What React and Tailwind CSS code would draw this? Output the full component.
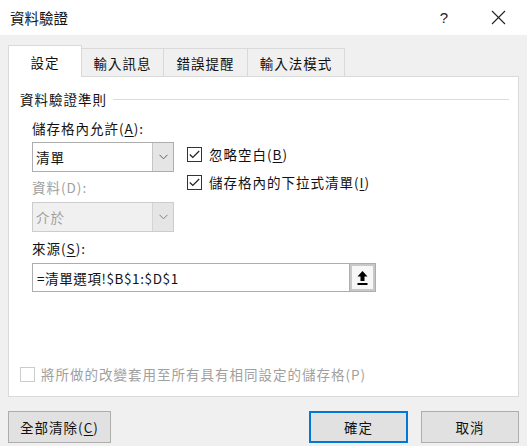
import React from "react";

const Chevron = ({ color = "#606060" }) => (
  <svg width="9" height="6" viewBox="0 0 9 6">
    <polyline points="0.5,0.8 4.5,4.8 8.5,0.8" fill="none" stroke={color} strokeWidth="1" />
  </svg>
);

const Check = ({ checked, disabled }) => (
  <div
    className={`w-[15px] h-[15px] border flex items-center justify-center bg-white ${
      disabled ? "border-[#cccccc]" : "border-[#333333]"
    }`}
  >
    {checked && (
      <svg width="11" height="9" viewBox="0 0 11 9">
        <polyline points="0.8,4.5 3.8,7.5 10.2,1" fill="none" stroke="#222" strokeWidth="1.2" />
      </svg>
    )}
  </div>
);

const U = ({ children }) => <span className="underline underline-offset-2">{children}</span>;

export default function App() {
  return (
    <div className="w-[527px] h-[446px] bg-[#f0f0f0] flex flex-col font-['Noto_Sans_CJK_TC',sans-serif] text-[13.5px] tracking-[1px] text-[#111] overflow-hidden">
      {/* Title bar */}
      <div className="h-[35px] bg-white flex items-center justify-between pl-[10px] pr-[21px] shrink-0">
        <span className="leading-[20px] text-[14.5px] tracking-normal">資料驗證</span>
        <div className="flex items-center gap-[42px]">
          <span className="text-[15px] leading-[20px] text-[#222] font-['Liberation_Sans',sans-serif]">?</span>
          <svg width="15" height="15" viewBox="0 0 15 15">
            <line x1="1" y1="1" x2="14" y2="14" stroke="#222" strokeWidth="1.1" />
            <line x1="14" y1="1" x2="1" y2="14" stroke="#222" strokeWidth="1.1" />
          </svg>
        </div>
      </div>

      {/* Tabs */}
      <div className="flex items-end pl-[8px] mt-[10px] h-[31px] shrink-0">
        <div className="w-[74px] h-[32px] bg-white border border-b-0 border-[#d9d9d9] flex items-center justify-center relative z-10 -mb-px">
          <span className="leading-[20px]">設定</span>
        </div>
        <div className="w-[82px] h-[28px] border border-l-0 border-b-0 border-[#d9d9d9] flex items-center justify-center">
          <span className="leading-[20px]">輸入訊息</span>
        </div>
        <div className="w-[84px] h-[28px] border border-l-0 border-b-0 border-[#d9d9d9] flex items-center justify-center">
          <span className="leading-[20px]">錯誤提醒</span>
        </div>
        <div className="w-[97px] h-[28px] border border-l-0 border-b-0 border-[#d9d9d9] flex items-center justify-center">
          <span className="leading-[20px]">輸入法模式</span>
        </div>
      </div>

      {/* Panel */}
      <div className="ml-[8px] w-[511px] h-[321px] bg-white border border-[#d9d9d9] flex flex-col shrink-0">
        <div className="flex items-center h-[20px] mt-[12px] pl-[11px] pr-[9px]">
          <span className="leading-[20px]">資料驗證準則</span>
          <div className="flex-1 h-px bg-[#dcdcdc] ml-[6px]" />
        </div>

        <div className="pl-[23px] flex flex-col">
          <div className="h-[20px] leading-[20px] mt-[9px]">
            儲存格內允許(<U>A</U>):
          </div>
          <div className="flex mt-[4px]">
            <div className="w-[142px] flex flex-col">
              <div className="h-[30px] border border-[#adadad] flex">
                <div className="flex-1 bg-white pl-[3px] flex items-center leading-[20px]">清單</div>
                <div className="w-[21px] bg-[#e5e5e5] border-l border-[#c4c4c4] flex items-center justify-center">
                  <Chevron />
                </div>
              </div>
              <div className="h-[20px] leading-[20px] mt-[5px] text-[#a0a0a0]">資料(D):</div>
              <div className="h-[30px] border border-[#cccccc] flex mt-[5px]">
                <div className="flex-1 bg-[#f0f0f0] pl-[3px] flex items-center leading-[20px] text-[#a0a0a0]">介於</div>
                <div className="w-[21px] bg-[#e5e5e5] border-l border-[#d4d4d4] flex items-center justify-center">
                  <Chevron color="#808080" />
                </div>
              </div>
            </div>
            <div className="ml-[13px] pt-[2px] flex flex-col gap-[8px]">
              <div className="flex items-center h-[20px] gap-[7px]">
                <Check checked />
                <span className="leading-[20px]">
                  忽略空白(<U>B</U>)
                </span>
              </div>
              <div className="flex items-center h-[20px] gap-[7px]">
                <Check checked />
                <span className="leading-[20px]">
                  儲存格內的下拉式清單(<U>I</U>)
                </span>
              </div>
            </div>
          </div>
          <div className="h-[20px] leading-[20px] mt-[6px]">
            來源(<U>S</U>):
          </div>
          <div className="w-[344px] h-[29px] border border-[#adadad] flex mt-[5px]">
            <div className="flex-1 bg-white pl-[4px] flex items-center leading-[20px] tracking-[0.6px]">=清單選項!$B$1:$D$1</div>
            <div className="w-[26px] border-l border-[#adadad] bg-[#c8c8c8] p-[2px] flex">
              <div className="flex-1 bg-[#f7f7f7] flex items-center justify-center">
                <svg width="11" height="16" viewBox="0 0 11 16">
                  <polygon points="5.5,1 10.5,6.5 7.5,6.5 7.5,11 3.5,11 3.5,6.5 0.5,6.5" fill="#000" />
                  <rect x="0.5" y="13" width="10" height="2" fill="#000" />
                </svg>
              </div>
            </div>
          </div>
        </div>

        <div className="mt-auto mb-[12px] pl-[11px] flex items-center h-[20px] gap-[6px]">
          <Check disabled />
          <span className="leading-[20px] text-[#a0a0a0]">將所做的改變套用至所有具有相同設定的儲存格(P)</span>
        </div>
      </div>

      {/* Buttons */}
      <div className="flex items-center mt-[14px] px-[8px] shrink-0">
        <div className="w-[103px] h-[32px] bg-[#e1e1e1] border border-[#adadad] flex items-center justify-center leading-[20px]">
          全部清除(<U>C</U>)
        </div>
        <div className="flex-1" />
        <div className="w-[99px] h-[32px] bg-[#e1e1e1] border-2 border-[#0078d7] flex items-center justify-center leading-[20px]">
          確定
        </div>
        <div className="w-[98px] h-[32px] bg-[#e1e1e1] border border-[#adadad] flex items-center justify-center leading-[20px] ml-[13px]">
          取消
        </div>
      </div>
    </div>
  );
}
